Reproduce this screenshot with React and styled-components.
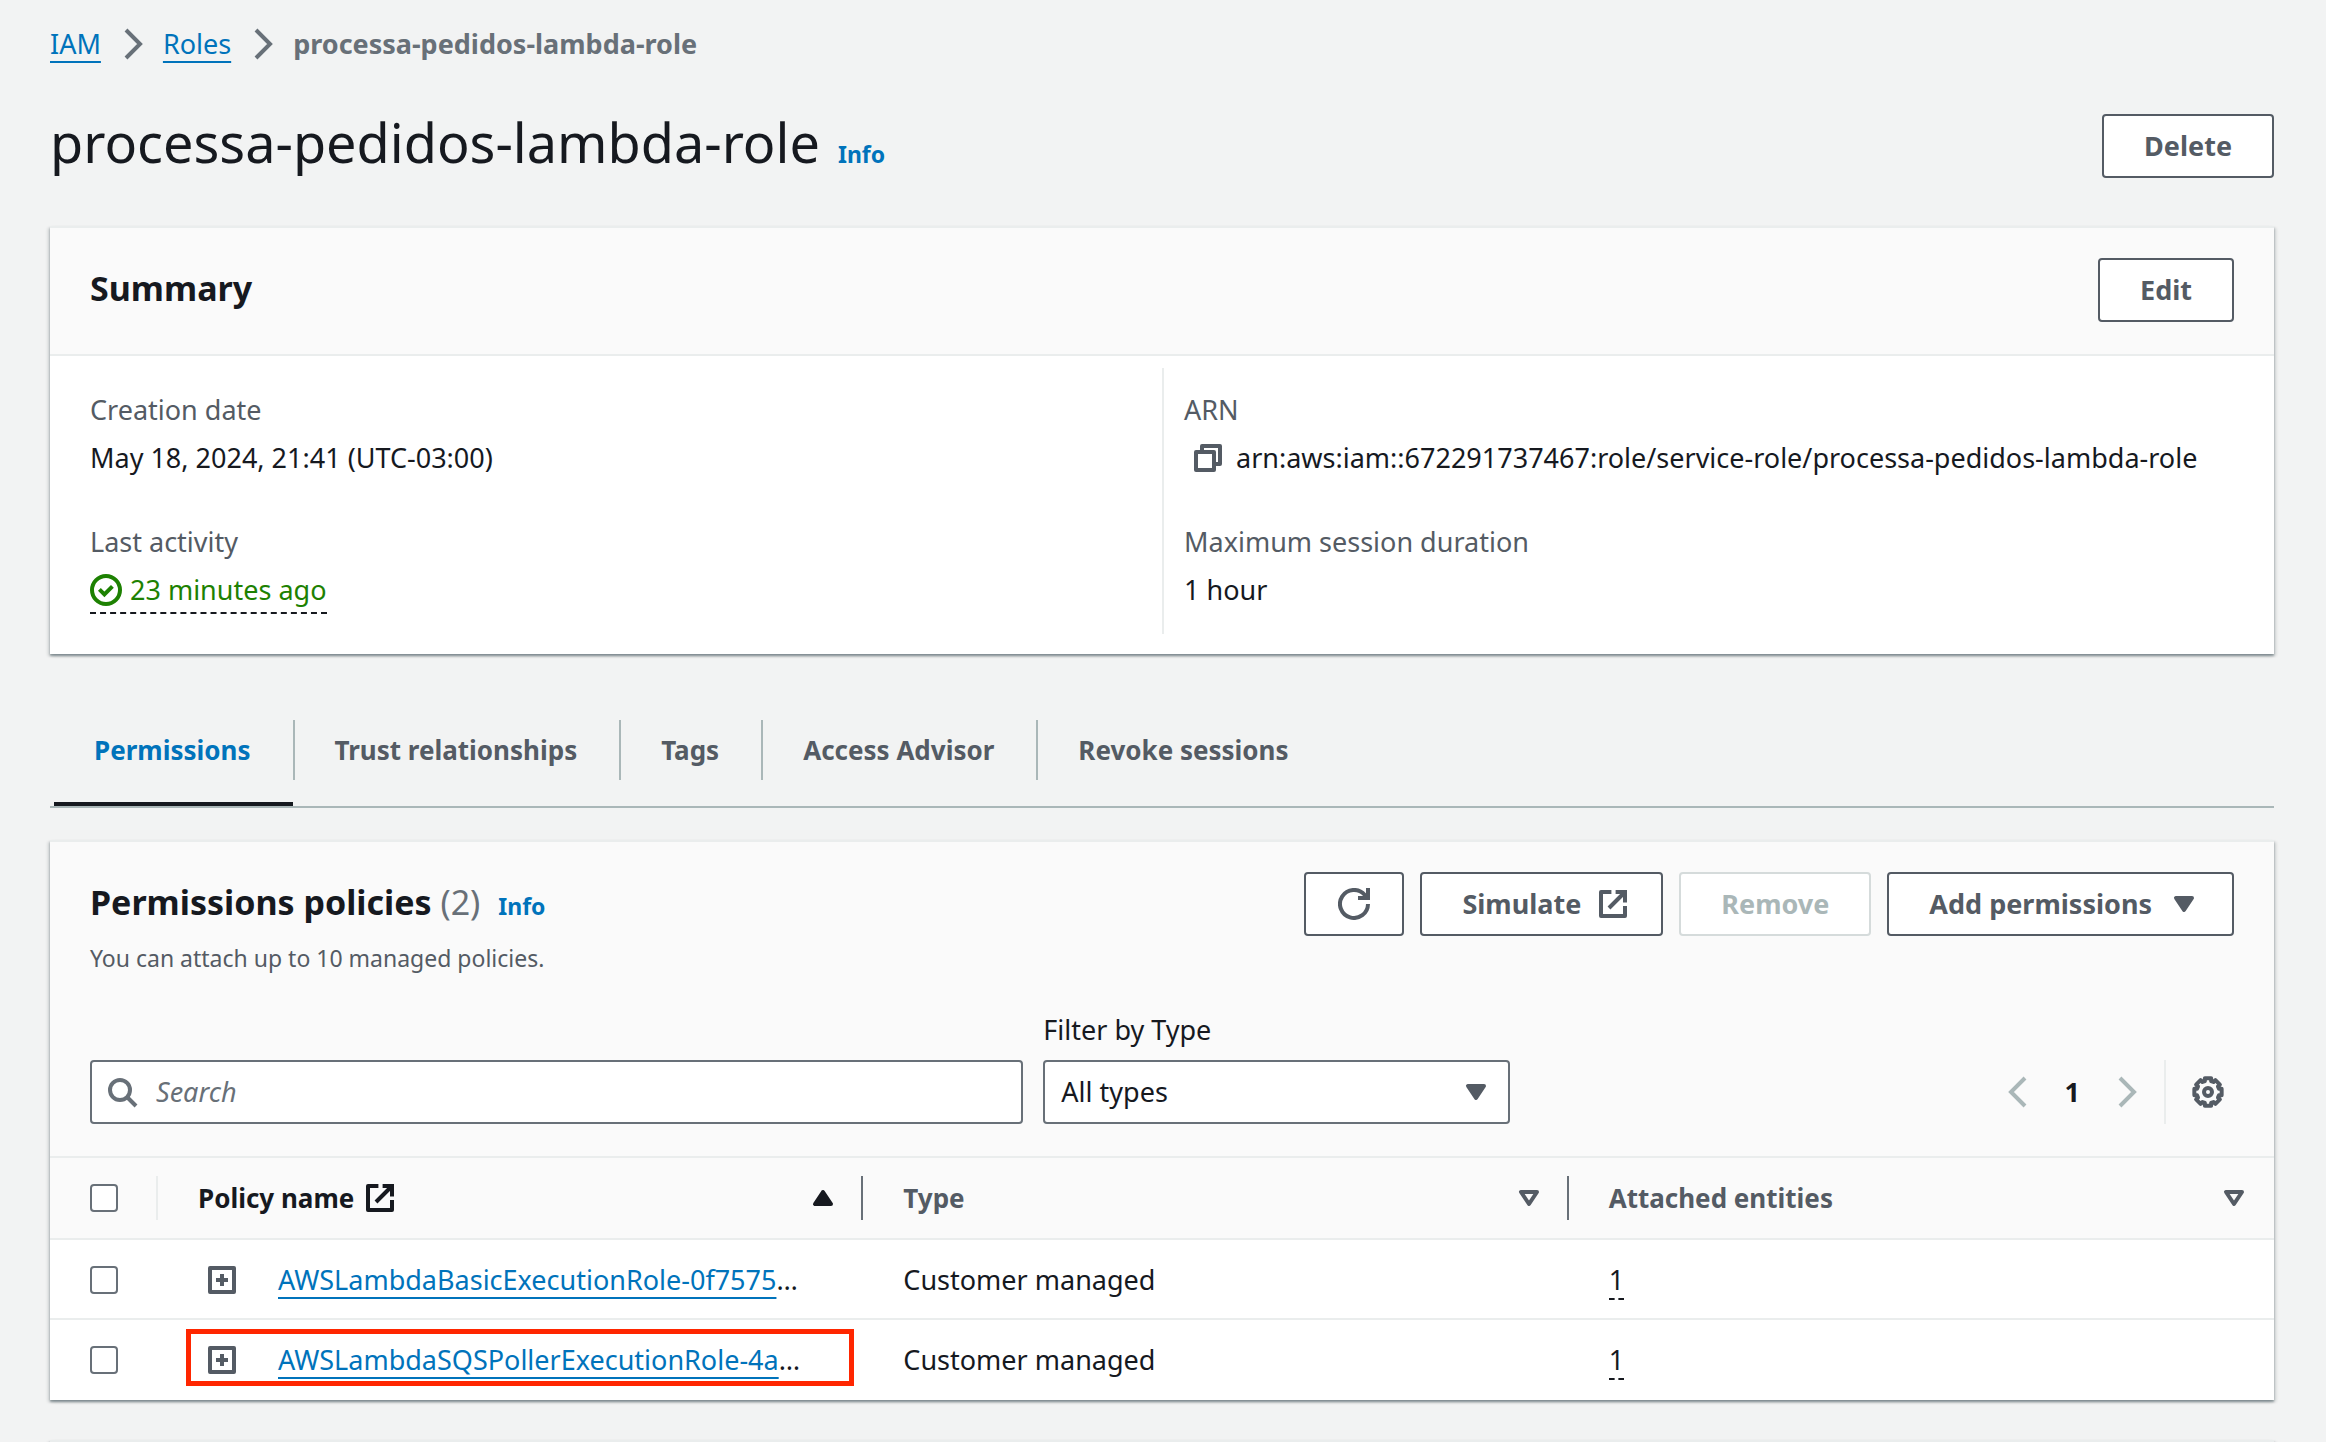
import React from 'react';
import styled, { createGlobalStyle, css } from 'styled-components';

const color = {
  page: '#f2f3f3',
  surface: '#ffffff',
  header: '#fafafa',
  text: '#16191f',
  label: '#545b64',
  muted: '#687078',
  link: '#0073bb',
  line: '#eaeded',
  tabLine: '#aab7b8',
  success: '#1d8102',
  mark: '#ff2600',
};

const GlobalStyle = createGlobalStyle`
  *, *::before, *::after { box-sizing: border-box; }
  body {
    margin: 0;
    background: ${color.page};
    color: ${color.text};
    font-family: "Noto Sans", "Open Sans", sans-serif;
    font-size: 27px;
    line-height: 44px;
  }
  button, input, select { font: inherit; color: inherit; }
  h1, h2, p, dl, dd, ul, ol { margin: 0; padding: 0; }
`;

/* ---------- icons ---------- */

const Svg = styled.svg`
  display: block;
  flex: none;
  width: 32px;
  height: 32px;
  fill: none;
  stroke: currentColor;
  stroke-width: 2;
`;

const Icon = ({ children, ...rest }) => (
  <Svg viewBox="0 0 16 16" aria-hidden="true" {...rest}>{children}</Svg>
);
const ChevronRight = () => <Icon><path d="M5 1l7 7-7 7" /></Icon>;
const ChevronLeft = () => <Icon><path d="M11 1L4 8l7 7" /></Icon>;
const ExternalIcon = () => (
  <Icon>
    <path d="M7.200 2H2v12h12V9" strokeLinejoin="round" />
    <path d="M9.300 2H14v5.200M6 10l8-8" />
  </Icon>
);
const RefreshIcon = () => (
  <Icon><path d="M15 8a7 7 0 1 1-1.700-4.600L14.500 5M15 0v5h-5" /></Icon>
);
const CaretDown = () => (
  <Icon><path d="M4 5h8l-4 6z" fill="currentColor" strokeLinejoin="round" /></Icon>
);
const CaretUp = () => (
  <Icon><path d="M4 11h8L8 5z" fill="currentColor" strokeLinejoin="round" /></Icon>
);
const CaretOutline = () => (
  <Icon><path d="M4 5h8l-4 6z" strokeLinejoin="round" /></Icon>
);
const CopyIcon = () => (
  <Icon><path d="M2 5h9v9H2zM5 5V2h9v9h-3" strokeLinejoin="round" /></Icon>
);
const CheckIcon = () => (
  <Icon><circle cx="8" cy="8" r="7" /><path d="M4.700 7.700l2.500 2.500 4-4" /></Icon>
);
const SearchIcon = () => (
  <Icon><circle cx="7" cy="7" r="5" /><path d="M10.500 10.500L15 15" /></Icon>
);
const PlusIcon = () => (
  <Icon><path d="M2 2h12v12H2zM8 5v6M5 8h6" strokeLinejoin="round" /></Icon>
);

const gearPoints = Array.from({ length: 8 }, (_, tooth) =>
  [[-13, 7], [13, 7], [16, 5.7], [29, 5.7]].map(([offset, radius]) => {
    const angle = ((tooth * 45 + offset) * Math.PI) / 180;
    return `${(8 + radius * Math.sin(angle)).toFixed(2)},${(8 - radius * Math.cos(angle)).toFixed(2)}`;
  }).join(' ')
).join(' ');

const GearIcon = () => (
  <Icon>
    <polygon points={gearPoints} strokeLinejoin="round" />
    <circle cx="8" cy="8" r="2" />
  </Icon>
);

/* ---------- page ---------- */

const Page = styled.main`
  padding: 22px 52px 0 50px;
`;

const Crumbs = styled.ol`
  display: flex;
  align-items: center;
  list-style: none;
`;

const Crumb = styled.li`
  display: flex;
  align-items: center;
  color: ${color.muted};
  font-weight: ${(p) => (p.$current ? 700 : 400)};

  svg { margin: 0 15px; }
`;

const Link = styled.a`
  color: ${color.link};
  text-decoration: underline;
  text-decoration-thickness: 2px;
  text-underline-offset: 7px;
`;

const Info = styled.a`
  color: ${color.link};
  font-size: 23px;
  font-weight: 700;
  text-decoration: none;
`;

const TitleRow = styled.header`
  display: flex;
  align-items: flex-start;
  justify-content: space-between;
  margin: 48px 0;
`;

const TitleText = styled.div`
  display: flex;
  align-items: baseline;
  gap: 18px;
`;

const Title = styled.h1`
  font-size: 54px;
  font-weight: 400;
  line-height: 56px;
`;

const Button = styled.button`
  display: inline-flex;
  align-items: center;
  gap: 16px;
  height: 64px;
  padding: 0 ${(p) => (p.$icon ? '32px' : '40px')} 0 ${(p) => (p.$icon === 'only' ? '32px' : '40px')};
  border: 2px solid ${color.label};
  border-radius: 4px;
  background: ${color.surface};
  color: ${color.label};
  font-weight: 700;
  white-space: nowrap;

  &:disabled {
    border-color: #d5dbdb;
    color: ${color.tabLine};
  }
`;

const Card = styled.section`
  border-top: 2px solid ${color.line};
  background: ${color.surface};
  box-shadow: 0 2px 2px 0 rgba(0, 28, 36, 0.3), 2px 2px 3px 0 rgba(0, 28, 36, 0.15),
    -2px 2px 3px 0 rgba(0, 28, 36, 0.15);
`;

const CardHeader = styled.div`
  display: flex;
  justify-content: space-between;
  align-items: flex-start;
  padding: 30px 40px ${(p) => (p.$open ? '28px' : '32px')};
  background: ${color.header};
  ${(p) => !p.$open && css`border-bottom: 2px solid ${color.line};`}
`;

const Heading = styled.h2`
  font-size: 34px;
  font-weight: 700;
  line-height: 60px;
`;

const Count = styled.span`
  color: ${color.muted};
  font-weight: 400;
`;

const HeadingLine = styled.div`
  display: flex;
  align-items: baseline;
  gap: 18px;
`;

const Description = styled.p`
  margin-top: 4px;
  color: ${color.label};
  font-size: 23px;
`;

const SummaryGrid = styled.div`
  display: grid;
  grid-template-columns: 1fr 1fr;
  padding: 12px 0 20px;
`;

const SummaryColumn = styled.dl`
  display: flex;
  flex-direction: column;
  gap: 40px;
  padding: 20px 0 20px 40px;

  & + & {
    padding-left: 20px;
    border-left: 2px solid ${color.line};
  }
`;

const Pair = styled.div`
  display: flex;
  flex-direction: column;
  align-items: flex-start;
  gap: 4px;
`;

const Term = styled.dt`
  color: ${color.label};
`;

const Value = styled.dd`
  display: flex;
  align-items: center;
  gap: 12px;
`;

const Activity = styled.dd`
  display: flex;
  align-items: center;
  gap: 8px;
  border-bottom: 2px dashed ${color.text};
  color: ${color.success};
`;

const IconButton = styled.button`
  display: flex;
  padding: 0;
  border: 0;
  background: none;
  color: ${color.label};

  &:disabled { color: ${color.tabLine}; }
`;

const CopyButton = styled(IconButton)`
  margin-left: 8px;
`;

/* ---------- tabs ---------- */

const Tabs = styled.div`
  display: flex;
  margin: 66px 0 32px;
  padding: 0 4px;
  border-bottom: 2px solid ${color.tabLine};
`;

const TabSlot = styled.div`
  position: relative;
  padding-bottom: 26px;

  ${(p) => p.$active && css`
    &::after {
      content: '';
      position: absolute;
      left: 0;
      right: 2px;
      bottom: 0;
      height: 4px;
      background: ${color.text};
    }
  `}
`;

const Tab = styled.button`
  display: block;
  height: 60px;
  padding: 0 42px 0 40px;
  border: 0;
  border-right: 2px solid ${(p) => (p.$last ? 'transparent' : color.tabLine)};
  background: none;
  color: ${(p) => (p['aria-selected'] ? color.link : color.label)};
  font-size: 26px;
  font-weight: 700;
`;

/* ---------- policies ---------- */

const Actions = styled.div`
  display: flex;
  gap: 16px;
`;

const Toolbar = styled.div`
  display: flex;
  align-items: flex-end;
  justify-content: space-between;
  padding: 0 40px 32px;
  background: ${color.header};
`;

const Filters = styled.div`
  display: grid;
  flex: 0 1 1420px;
  grid-template-columns: 2fr 1fr;
  align-items: end;
  gap: 20px;
`;

const Field = styled.div`
  display: flex;
  align-items: center;
  gap: 18px;
  height: 64px;
  padding: 0 14px;
  border: 2px solid ${color.muted};
  border-radius: 4px;
  background: ${color.surface};
  color: ${color.muted};
`;

const SearchInput = styled.input`
  flex: 1;
  min-width: 0;
  padding: 0;
  border: 0;
  outline: 0;
  background: none;
  color: ${color.text};

  &::placeholder {
    color: ${color.muted};
    font-style: italic;
    opacity: 1;
  }
`;

const FilterLabel = styled.label`
  display: block;
  margin-bottom: 8px;
`;

const SelectBox = styled.div`
  position: relative;
  color: ${color.label};

  svg {
    position: absolute;
    top: 16px;
    right: 18px;
    pointer-events: none;
  }
`;

const Select = styled.select`
  display: block;
  width: 100%;
  height: 64px;
  padding: 0 64px 0 16px;
  border: 2px solid ${color.muted};
  border-radius: 4px;
  background: ${color.surface};
  color: ${color.text};
  appearance: none;
`;

const Pager = styled.div`
  display: flex;
  align-items: center;
  gap: 22px;
  height: 64px;
`;

const PageNumber = styled.button`
  padding: 0 8px;
  border: 0;
  background: none;
  font-weight: 700;
`;

const Preferences = styled.div`
  display: flex;
  align-items: center;
  height: 64px;
  padding: 0 10px 0 26px;
  border-left: 2px solid ${color.line};
`;

const Table = styled.table`
  width: 100%;
  border-top: 2px solid ${color.line};
  border-collapse: separate;
  border-spacing: 0;
  table-layout: fixed;
`;

const HeadCell = styled.th`
  height: 82px;
  padding: 0;
  border-bottom: 2px solid ${color.line};
  background: ${color.header};
  color: ${(p) => (p.$sorted ? color.text : color.label)};
  font-size: 26px;
  text-align: left;
  width: ${(p) => (p.$narrow ? '108px' : 'auto')};
`;

const HeadInner = styled.div`
  display: flex;
  align-items: center;
  height: 44px;
  padding: 0 22px 0 40px;
  border-right: 2px solid ${(p) => p.$line || 'transparent'};
`;

const SortButton = styled.button`
  display: flex;
  flex: 1;
  align-items: center;
  gap: 10px;
  padding: 0;
  border: 0;
  background: none;
  font-weight: 700;

  & > svg:last-child { margin-left: auto; }
`;

const Cell = styled.td`
  position: relative;
  height: 80px;
  padding: 2px 0 0 ${(p) => p.$indent || '40px'};
  border-bottom: 2px solid ${(p) => (p.$last ? color.surface : color.line)};
  white-space: nowrap;
`;

const PolicyName = styled.div`
  display: flex;
  align-items: center;
  gap: 40px;
`;

const Checkbox = styled.input`
  display: block;
  flex: none;
  width: 28px;
  height: 28px;
  margin: 0;
  border: 2px solid ${color.muted};
  border-radius: 4px;
  background: ${color.surface};
  appearance: none;
`;

const Entities = styled.span`
  display: inline-block;
  border-bottom: 2px dashed ${color.text};
  line-height: 36px;
`;

const Highlight = styled.span`
  position: absolute;
  inset: 9px 9px 12px 28px;
  border: 5px solid ${color.mark};
  pointer-events: none;
`;

const NextCard = styled(Card)`
  height: 80px;
  margin-top: 40px;
`;

const Clip = styled.div`
  height: 100vh;
  overflow: hidden;
`;

const tabs = ['Permissions', 'Trust relationships', 'Tags', 'Access Advisor', 'Revoke sessions'];

const policies = [
  { name: 'AWSLambdaBasicExecutionRole-0f7575', type: 'Customer managed', entities: 1 },
  { name: 'AWSLambdaSQSPollerExecutionRole-4a', type: 'Customer managed', entities: 1, marked: true },
];

export default function App() {
  return (
    <Clip>
      <GlobalStyle />
      <Page>
        <nav aria-label="Breadcrumbs">
          <Crumbs>
            <Crumb><Link href="#iam">IAM</Link><ChevronRight /></Crumb>
            <Crumb><Link href="#roles">Roles</Link><ChevronRight /></Crumb>
            <Crumb $current>processa-pedidos-lambda-role</Crumb>
          </Crumbs>
        </nav>

        <TitleRow>
          <TitleText>
            <Title>processa-pedidos-lambda-role</Title>
            <Info href="#info">Info</Info>
          </TitleText>
          <Button type="button">Delete</Button>
        </TitleRow>

        <Card>
          <CardHeader>
            <Heading>Summary</Heading>
            <Button type="button">Edit</Button>
          </CardHeader>
          <SummaryGrid>
            <SummaryColumn>
              <Pair>
                <Term>Creation date</Term>
                <Value>May 18, 2024, 21:41 (UTC-03:00)</Value>
              </Pair>
              <Pair>
                <Term>Last activity</Term>
                <Activity><CheckIcon />23 minutes ago</Activity>
              </Pair>
            </SummaryColumn>
            <SummaryColumn>
              <Pair>
                <Term>ARN</Term>
                <Value>
                  <CopyButton type="button" aria-label="Copy ARN"><CopyIcon /></CopyButton>
                  arn:aws:iam::672291737467:role/service-role/processa-pedidos-lambda-role
                </Value>
              </Pair>
              <Pair>
                <Term>Maximum session duration</Term>
                <Value>1 hour</Value>
              </Pair>
            </SummaryColumn>
          </SummaryGrid>
        </Card>

        <Tabs role="tablist">
          {tabs.map((name, i) => (
            <TabSlot key={name} $active={i === 0}>
              <Tab type="button" role="tab" aria-selected={i === 0} $last={i === tabs.length - 1}>
                {name}
              </Tab>
            </TabSlot>
          ))}
        </Tabs>

        <Card>
          <CardHeader $open>
            <div>
              <HeadingLine>
                <Heading>Permissions policies <Count>(2)</Count></Heading>
                <Info href="#policies-info">Info</Info>
              </HeadingLine>
              <Description>You can attach up to 10 managed policies.</Description>
            </div>
            <Actions>
              <Button type="button" $icon="only" aria-label="Refresh"><RefreshIcon /></Button>
              <Button type="button" $icon="end">Simulate<ExternalIcon /></Button>
              <Button type="button" disabled>Remove</Button>
              <Button type="button" $icon="end">Add permissions<CaretDown /></Button>
            </Actions>
          </CardHeader>

          <Toolbar>
            <Filters>
              <Field>
                <SearchIcon />
                <SearchInput type="text" placeholder="Search" aria-label="Search" />
              </Field>
              <div>
                <FilterLabel htmlFor="type-filter">Filter by Type</FilterLabel>
                <SelectBox>
                  <Select id="type-filter" defaultValue="all">
                    <option value="all">All types</option>
                  </Select>
                  <CaretDown />
                </SelectBox>
              </div>
            </Filters>
            <Pager>
              <IconButton type="button" disabled aria-label="Previous page"><ChevronLeft /></IconButton>
              <PageNumber type="button">1</PageNumber>
              <IconButton type="button" disabled aria-label="Next page"><ChevronRight /></IconButton>
              <Preferences>
                <IconButton type="button" aria-label="Preferences"><GearIcon /></IconButton>
              </Preferences>
            </Pager>
          </Toolbar>

          <Table>
            <thead>
              <tr>
                <HeadCell $narrow>
                  <HeadInner $line={color.line}>
                    <Checkbox type="checkbox" aria-label="Select all policies" />
                  </HeadInner>
                </HeadCell>
                <HeadCell $sorted>
                  <HeadInner $line={color.muted}>
                    <SortButton type="button">Policy name<ExternalIcon /><CaretUp /></SortButton>
                  </HeadInner>
                </HeadCell>
                <HeadCell>
                  <HeadInner $line={color.muted}>
                    <SortButton type="button">Type<CaretOutline /></SortButton>
                  </HeadInner>
                </HeadCell>
                <HeadCell>
                  <HeadInner>
                    <SortButton type="button">Attached entities<CaretOutline /></SortButton>
                  </HeadInner>
                </HeadCell>
              </tr>
            </thead>
            <tbody>
              {policies.map((policy, i) => {
                const last = i === policies.length - 1;
                return (
                  <tr key={policy.name}>
                    <Cell $last={last}>
                      <Checkbox type="checkbox" aria-label={`Select ${policy.name}`} />
                    </Cell>
                    <Cell $last={last} $indent="48px">
                      <PolicyName>
                        <IconButton type="button" aria-label="Expand"><PlusIcon /></IconButton>
                        <span><Link href="#policy">{policy.name}</Link>…</span>
                      </PolicyName>
                      {policy.marked && <Highlight />}
                    </Cell>
                    <Cell $last={last}>{policy.type}</Cell>
                    <Cell $last={last}><Entities>{policy.entities}</Entities></Cell>
                  </tr>
                );
              })}
            </tbody>
          </Table>
        </Card>
        <NextCard />
      </Page>
    </Clip>
  );
}
